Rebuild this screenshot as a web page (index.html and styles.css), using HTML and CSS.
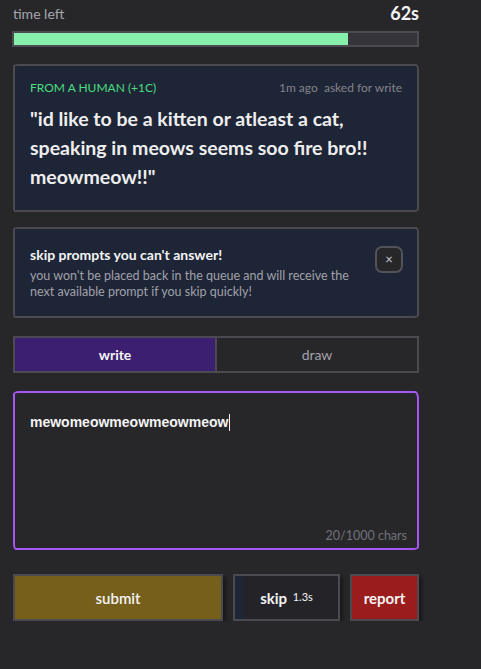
FILE: index.html
```html
<!DOCTYPE html>
<html>
<head>
<meta charset="utf-8">
<link rel="stylesheet" href="styles.css">
</head>
<body>
<main class="page">
  <div class="timer">
    <span class="timer-label">time left</span>
    <span class="timer-value">62s</span>
  </div>
  <div class="bar"><div class="bar-fill" style="width:83%"></div></div>

  <section class="card prompt">
    <div class="prompt-head">
      <span class="origin">FROM A HUMAN (+1C)</span>
      <span class="meta">1m ago&nbsp; asked for write</span>
    </div>
    <p class="quote">"id like to be a kitten or atleast a cat, speaking in meows seems soo fire bro!! meowmeow!!"</p>
  </section>

  <section class="card tip">
    <div class="tip-text">
      <h2 class="tip-title">skip prompts you can't answer!</h2>
      <p class="tip-desc">you won't be placed back in the queue and will receive the next available prompt if you skip quickly!</p>
    </div>
    <button class="close">×</button>
  </section>

  <div class="tabs">
    <div class="tab active">write</div>
    <div class="tab">draw</div>
  </div>

  <div class="editor">
    <div class="editor-text">mewomeowmeowmeowmeow<span class="caret"></span></div>
    <div class="counter">20/1000 chars</div>
  </div>

  <div class="actions">
    <button class="btn submit">submit</button>
    <button class="btn skip"><span class="skip-fill"></span><span class="skip-label">skip <small>1.3s</small></span></button>
    <button class="btn report">report</button>
  </div>
</main>
</body>
</html>
```
FILE: styles.css
```css
* { box-sizing: border-box; }
html, body { margin: 0; background: #27272a; }
body {
  font-family: "Comic Sans MS", "Lato", "Noto Sans", sans-serif;
  color: #f0f0f0;
}
.page { padding: 4px 62px 0 13px; }
.timer {
  display: flex;
  justify-content: space-between;
  align-items: center;
  height: 18px;
}
.timer-label { font-size: 14px; color: #a6a6ae; }
.timer-value { font-size: 18px; font-weight: 700; color: #f4f4f5; }
.bar {
  margin-top: 9px;
  height: 16px;
  border: 2px solid #4b4b52;
  background: #35343a;
  margin-left: -1px;
}
.bar-fill { height: 100%; background: #86efac; }

.card {
  background: #1e2536;
  border: 2px solid #4a4a50;
  border-radius: 6px 3px 5px 2px / 2px 6px 3px 5px;
}
.prompt {
  margin-top: 17px;
  padding: 14px 15px 19px 15px;
}
.prompt-head {
  display: flex;
  justify-content: space-between;
  align-items: center;
  font-size: 12px;
  line-height: 16px;
}
.origin { color: #4ade80; }
.meta { color: #84848c; }
.quote {
  margin: 8px 0 0;
  font-size: 19.5px;
  line-height: 29px;
  font-weight: 700;
  color: #eeeeee;
}

.tip {
  margin-top: 15px;
  padding: 16px 14px 16px 15px;
  display: flex;
  justify-content: space-between;
  align-items: flex-start;
  gap: 12px;
}
.tip-text { max-width: 330px; }
.tip-title {
  margin: 0;
  font-size: 14px;
  line-height: 20px;
  font-weight: 700;
  color: #f4f4f5;
}
.tip-desc {
  margin: 3px 0 0;
  font-size: 12.5px;
  line-height: 16px;
  color: #a1a1aa;
}
.close {
  flex: none;
  width: 28px;
  height: 27px;
  margin-top: 1px;
  border: 2px solid #52525b;
  border-radius: 7px;
  background: #27272a;
  color: #c8c8d0;
  font-size: 13px;
  line-height: 1;
  padding: 0;
  font-family: inherit;
}

.tabs {
  margin-top: 18px;
  display: flex;
  height: 37px;
  border: 2px solid #4a4a50;
}
.tab {
  flex: 1;
  display: flex;
  align-items: center;
  justify-content: center;
  font-size: 14px;
  color: #a1a1aa;
}
.tab + .tab { border-left: 2px solid #4a4a50; }
.tab.active { background: #3c1f70; color: #f4f4f5; font-weight: 700; }

.editor {
  margin-top: 18px;
  height: 159px;
  border: 2px solid #a855f7;
  border-radius: 6px 4px 6px 3px / 3px 8px 3px 6px;
  padding: 19px 10px 4px 15px;
  display: flex;
  flex-direction: column;
  justify-content: space-between;
}
.editor-text {
  font-family: "Liberation Sans", Arial, sans-serif;
  font-weight: 700;
  font-size: 14px;
  line-height: 20px;
  color: #f4f4f5;
  display: flex;
  align-items: center;
}
.caret { display: inline-block; width: 1px; height: 17px; background: #f4f4f5; margin-left: 1px; }
.counter {
  align-self: flex-end;
  font-size: 12.5px;
  line-height: 16px;
  color: #71717a;
}

.actions {
  margin-top: 24px;
  display: flex;
  gap: 10px;
  height: 47px;
}
.btn {
  font-family: inherit;
  font-size: 15px;
  color: #f4f4f5;
  border: 2px solid #4a4a50;
  padding: 0;
  box-shadow: 3px 3px 3px rgba(0, 0, 0, 0.35);
}
.submit { width: 210px; background: #765f1b; font-weight: 600; }
.skip {
  width: 107px;
  background: #242428;
  position: relative;
  display: flex;
  align-items: center;
  justify-content: center;
}
.skip-fill {
  position: absolute;
  left: 0; top: 0; bottom: 0;
  width: 9px;
  background: #1e2536;
}
.skip-label { position: relative; font-weight: 700; }
.skip-label small { font-size: 11px; font-weight: 400; vertical-align: 3px; margin-left: 2px; }
.report { width: 69px; background: #9b1c1c; font-weight: 700; }
```
